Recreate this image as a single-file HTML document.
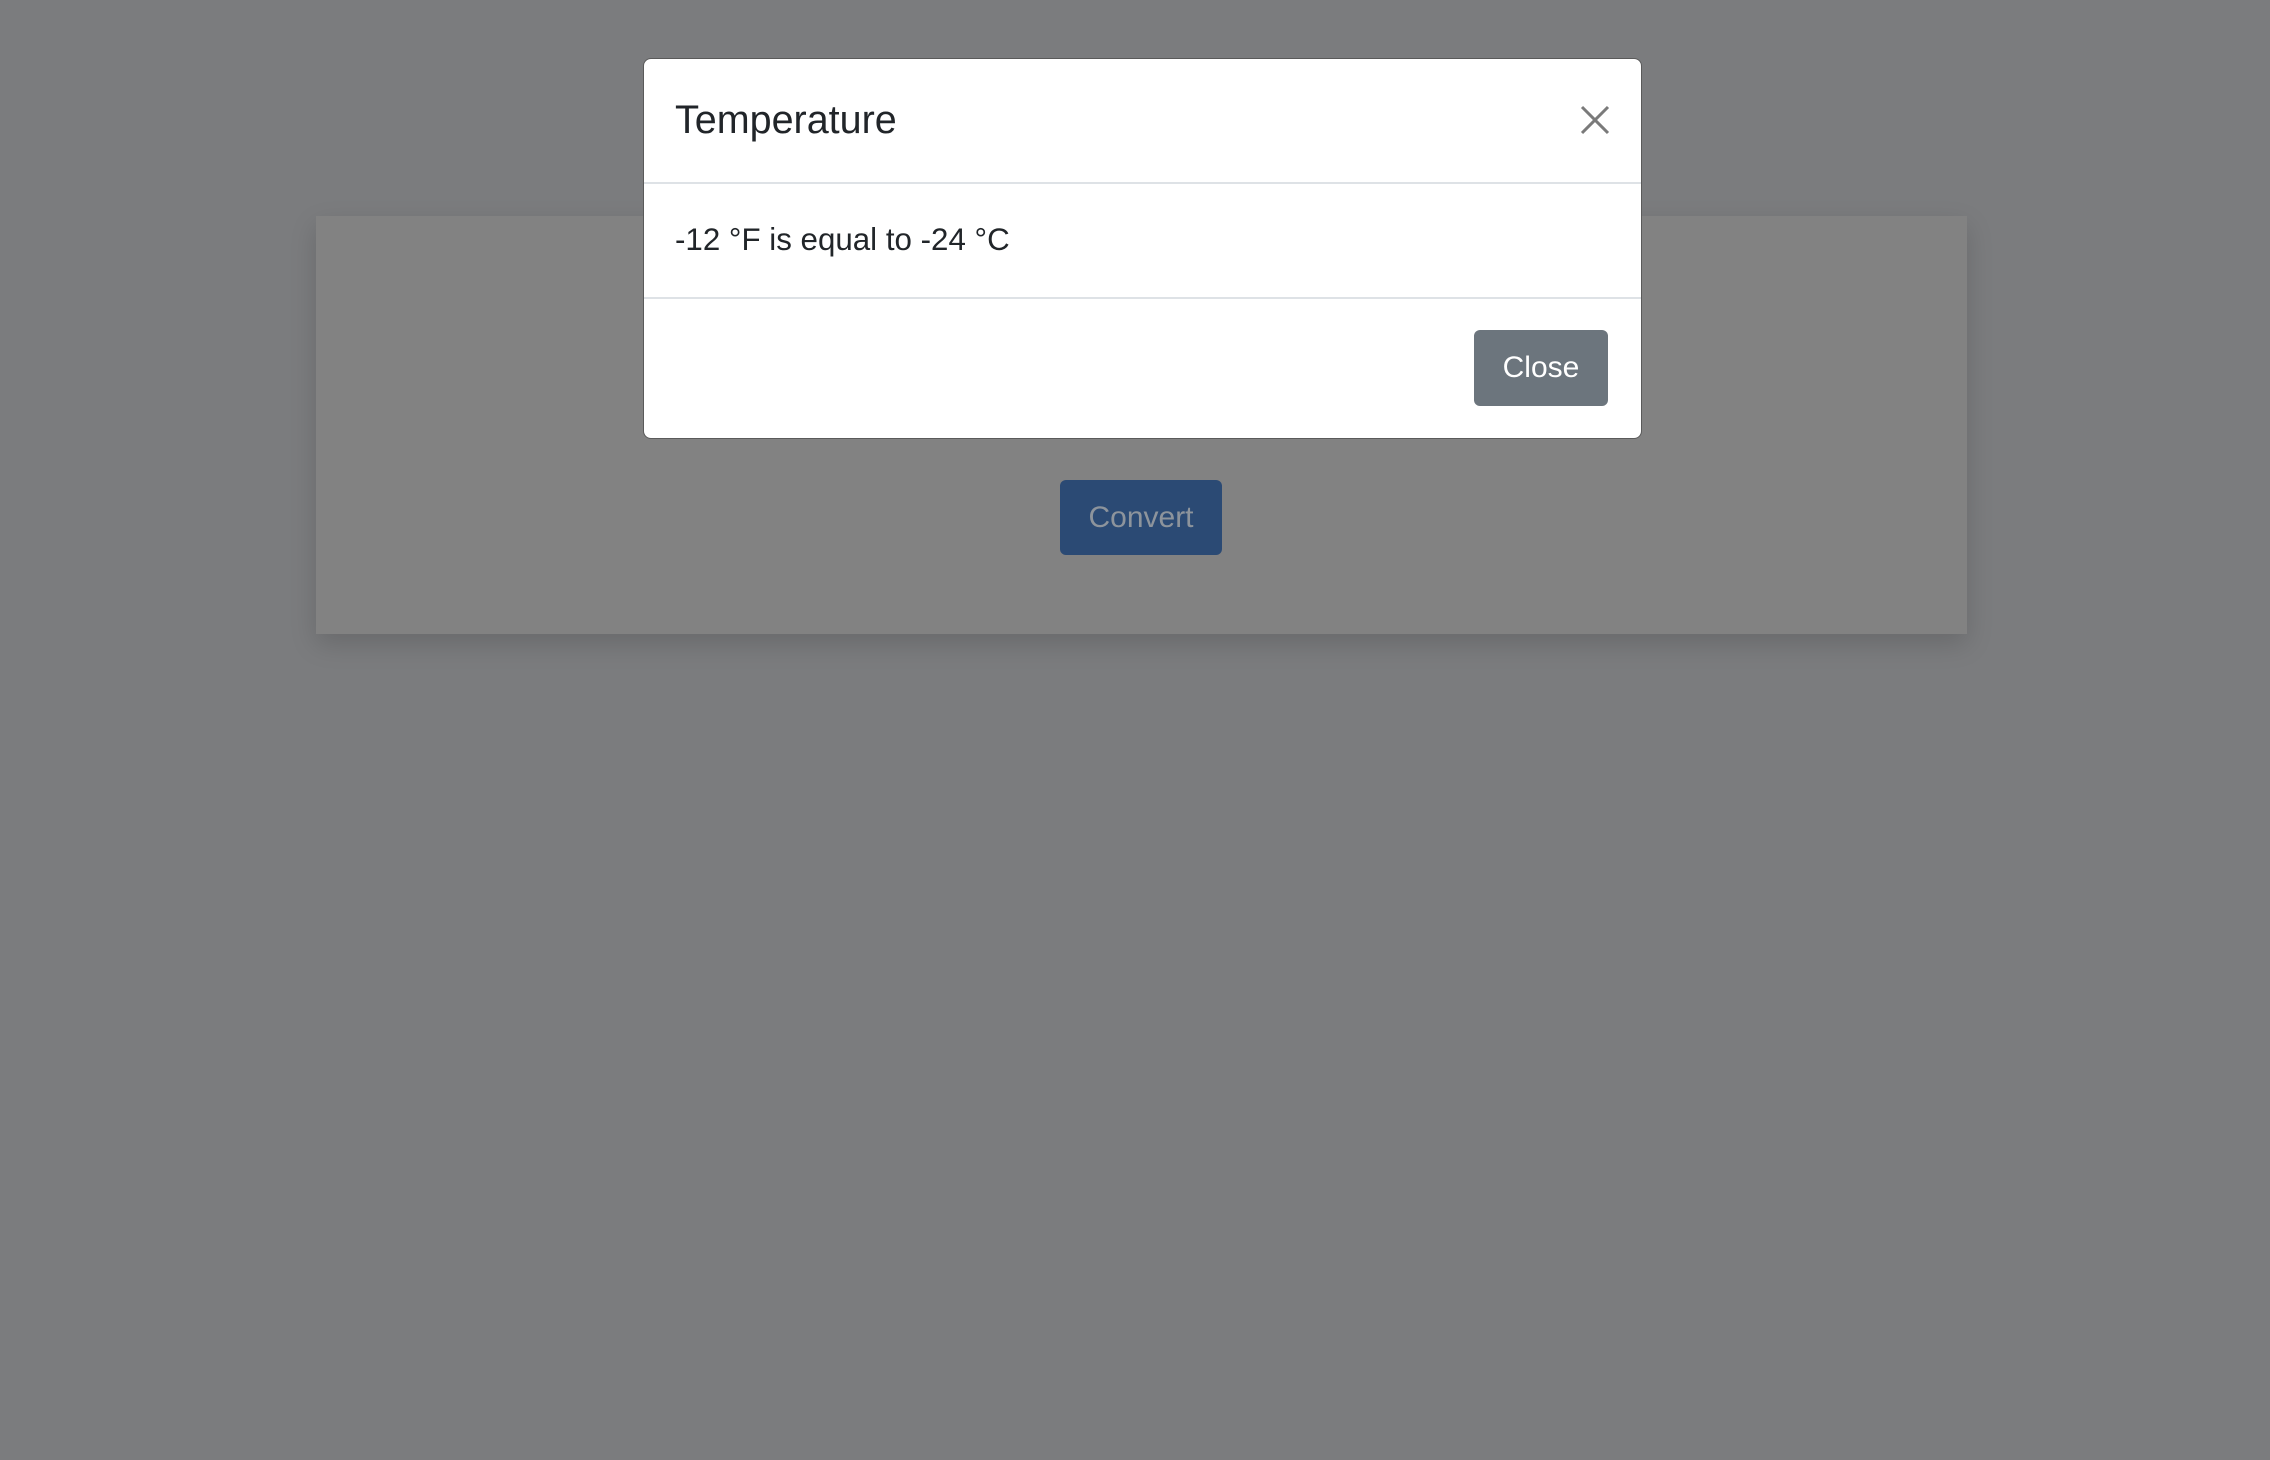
<!DOCTYPE html>
<html><head><meta charset="utf-8"><style>
html,body{margin:0;padding:0;width:2270px;height:1460px;overflow:hidden;background:#7b7c7e;font-family:"Liberation Sans",sans-serif;}
.card{position:absolute;left:316px;top:216px;width:1651px;height:418px;background:#828282;box-shadow:0 10px 25px rgba(0,0,0,0.15);}
.conv{position:absolute;left:1060px;top:480px;width:162px;height:75px;background:#2b4a74;border-radius:6px;color:#8d949c;font-size:30px;line-height:75px;text-align:center;}
.modal{position:absolute;left:643px;top:58px;width:999px;height:381px;background:#fff;border:1.5px solid #5a5a5a;border-radius:8px;box-sizing:border-box;}
.title{position:absolute;left:31px;top:38px;font-size:39.5px;color:#212529;line-height:46px;}
.hl{position:absolute;left:0;right:0;height:2px;background:#dee2e6;}
.body{position:absolute;left:31px;top:161px;font-size:31.3px;color:#212529;line-height:40px;}
.btn{position:absolute;left:830px;top:271px;width:134px;height:76px;background:#6c757d;border-radius:6px;color:#fff;font-size:30px;line-height:76px;text-align:center;}
svg{position:absolute;left:936px;top:46px;}
</style></head><body>
<div class="card"></div>
<div class="conv">Convert</div>
<div class="modal">
<div class="title">Temperature</div>
<svg width="30" height="30" viewBox="0 0 30 30"><path d="M2 2L28 28M28 2L2 28" stroke="#7a7a7a" stroke-width="3"/></svg>
<div class="hl" style="top:123px"></div>
<div class="body">-12 °F is equal to -24 °C</div>
<div class="hl" style="top:238px"></div>
<div class="btn">Close</div>
</div>
</body></html>
